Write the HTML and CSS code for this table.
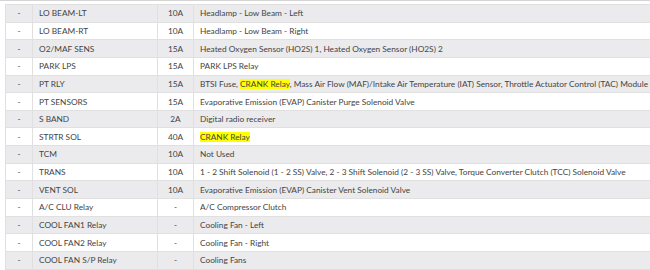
FILE: index.html
```html
<!DOCTYPE html>
<html lang="en">
<head>
<meta charset="utf-8">
<title>Fuse table</title>
<link rel="stylesheet" href="styles.css">
</head>
<body>
<div class="wrap">
<table class="fuses">
<tbody>
<tr><td class="c-no">-</td><td class="c-name">LO BEAM-LT</td><td class="c-amp">10A</td><td class="c-desc">Headlamp - Low Beam - Left</td></tr>
<tr><td class="c-no">-</td><td class="c-name">LO BEAM-RT</td><td class="c-amp">10A</td><td class="c-desc">Headlamp - Low Beam - Right</td></tr>
<tr><td class="c-no">-</td><td class="c-name">O2/MAF SENS</td><td class="c-amp">15A</td><td class="c-desc">Heated Oxygen Sensor (HO2S) 1, Heated Oxygen Sensor (HO2S) 2</td></tr>
<tr><td class="c-no">-</td><td class="c-name">PARK LPS</td><td class="c-amp">15A</td><td class="c-desc">PARK LPS Relay</td></tr>
<tr><td class="c-no">-</td><td class="c-name">PT RLY</td><td class="c-amp">15A</td><td class="c-desc">BTSI Fuse, <mark class="hl">CRANK Relay</mark>, Mass Air Flow (MAF)/Intake Air Temperature (IAT) Sensor, Throttle Actuator Control (TAC) Module</td></tr>
<tr><td class="c-no">-</td><td class="c-name">PT SENSORS</td><td class="c-amp">15A</td><td class="c-desc">Evaporative Emission (EVAP) Canister Purge Solenoid Valve</td></tr>
<tr><td class="c-no">-</td><td class="c-name">S BAND</td><td class="c-amp">2A</td><td class="c-desc">Digital radio receiver</td></tr>
<tr><td class="c-no">-</td><td class="c-name">STRTR SOL</td><td class="c-amp">40A</td><td class="c-desc"><mark class="hl">CRANK Relay</mark></td></tr>
<tr><td class="c-no">-</td><td class="c-name">TCM</td><td class="c-amp">10A</td><td class="c-desc">Not Used</td></tr>
<tr><td class="c-no">-</td><td class="c-name">TRANS</td><td class="c-amp">10A</td><td class="c-desc">1 - 2 Shift Solenoid (1 - 2 SS) Valve, 2 - 3 Shift Solenoid (2 - 3 SS) Valve, Torque Converter Clutch (TCC) Solenoid Valve</td></tr>
<tr><td class="c-no">-</td><td class="c-name">VENT SOL</td><td class="c-amp">10A</td><td class="c-desc">Evaporative Emission (EVAP) Canister Vent Solenoid Valve</td></tr>
<tr><td class="c-no">-</td><td class="c-name">A/C CLU Relay</td><td class="c-amp">-</td><td class="c-desc">A/C Compressor Clutch</td></tr>
<tr><td class="c-no">-</td><td class="c-name">COOL FAN1 Relay</td><td class="c-amp">-</td><td class="c-desc">Cooling Fan - Left</td></tr>
<tr><td class="c-no">-</td><td class="c-name">COOL FAN2 Relay</td><td class="c-amp">-</td><td class="c-desc">Cooling Fan - Right</td></tr>
<tr><td class="c-no">-</td><td class="c-name">COOL FAN S/P Relay</td><td class="c-amp">-</td><td class="c-desc">Cooling Fans</td></tr>
</tbody>
</table>
</div>
</body>
</html>
```
FILE: styles.css
```css
html, body {
  margin: 0;
  padding: 0;
  background: #ffffff;
}
.wrap {
  padding: 3px 0 0 5px;
  border-top: 1px solid #d4d4d4;
  overflow: hidden;
}
.fuses {
  border-collapse: collapse;
  width: 660px;
  table-layout: fixed;
  font-family: "Lato", "Liberation Sans", sans-serif;
  font-size: 8.3px;
  color: #444444;
}
.fuses td {
  height: 17.65px;
  box-sizing: border-box;
  padding: 0 6px;
  border: 1px solid #e0e0e0;
  white-space: nowrap;
  vertical-align: middle;
}
.fuses tr:nth-child(odd) td {
  background: #ebebed;
}
.fuses tr:nth-child(even) td {
  background: #ffffff;
}
.c-no { width: 27px; text-align: center; }
.c-name { width: 125px; }
.c-amp { width: 36px; text-align: center; }
.hl {
  background: #ffff00;
  color: inherit;
}
```
